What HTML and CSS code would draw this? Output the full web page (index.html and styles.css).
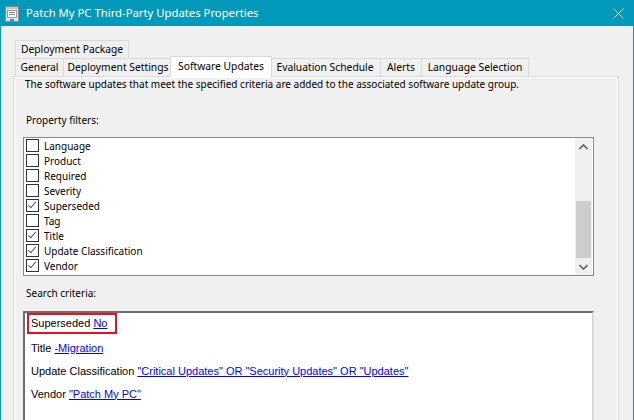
FILE: index.html
```html
<!DOCTYPE html>
<html>
<head>
<meta charset="utf-8">
<link rel="stylesheet" href="styles.css">
</head>
<body>
<div class="window">
  <div class="titlebar">
    <svg class="appicon" width="14" height="16" viewBox="0 0 14 16">
      <rect x="0.5" y="0.5" width="13" height="15" fill="#e8e8e8" stroke="#8a8a8a"/>
      <rect x="1" y="1" width="12" height="2" fill="#c4c4c4"/>
      <rect x="2.5" y="4.5" width="9" height="7" fill="#ffffff" stroke="#9a9a9a"/>
      <line x1="4" y1="6.5" x2="10" y2="6.5" stroke="#8a8a8a"/>
      <line x1="4" y1="8.5" x2="10" y2="8.5" stroke="#8a8a8a"/>
      <rect x="5" y="13" width="4" height="2" fill="#2e8fd8"/>
    </svg>
    <span class="title">Patch My PC Third-Party Updates Properties</span>
    <svg class="close" width="11" height="11" viewBox="0 0 11 11">
      <path d="M0.5 0.5 L10.5 10.5 M10.5 0.5 L0.5 10.5" stroke="#ffffff" stroke-width="1" fill="none"/>
    </svg>
  </div>
  <div class="client">
    <div class="tabs">
      <div class="tabrow">
        <div class="tab t-dp">Deployment Package</div>
      </div>
      <div class="tabrow">
        <div class="tab t-gen">General</div>
        <div class="tab t-ds">Deployment Settings</div>
        <div class="tab sel t-su">Software Updates</div>
        <div class="tab t-es">Evaluation Schedule</div>
        <div class="tab t-al">Alerts</div>
        <div class="tab t-ls">Language Selection</div>
      </div>
    </div>
    <div class="panel">
      <div class="intro">The software updates that meet the specified criteria are added to the associated software update group.</div>
      <div class="label first">Property filters:</div>
      <div class="listbox">
        <ul class="items">
          <li><span class="cb"></span>Language</li>
          <li><span class="cb"></span>Product</li>
          <li><span class="cb"></span>Required</li>
          <li><span class="cb"></span>Severity</li>
          <li><span class="cb on"></span>Superseded</li>
          <li><span class="cb"></span>Tag</li>
          <li><span class="cb on"></span>Title</li>
          <li><span class="cb on"></span>Update Classification</li>
          <li><span class="cb on"></span>Vendor</li>
        </ul>
        <div class="vscroll">
          <div class="sbtn">
            <svg width="9" height="6" viewBox="0 0 9 6"><path d="M0.5 5 L4.5 1 L8.5 5" stroke="#606060" stroke-width="1.6" fill="none"/></svg>
          </div>
          <div class="track"><div class="thumb"></div></div>
          <div class="sbtn">
            <svg width="9" height="6" viewBox="0 0 9 6"><path d="M0.5 1 L4.5 5 L8.5 1" stroke="#606060" stroke-width="1.6" fill="none"/></svg>
          </div>
        </div>
      </div>
      <div class="label second">Search criteria:</div>
      <div class="criteria">
        <div class="crow top"><span class="hl">Superseded <a class="lnk">No</a></span></div>
        <div class="crow">Title&nbsp;<a class="lnk">-Migration</a></div>
        <div class="crow">Update Classification&nbsp;<a class="lnk">"Critical Updates" OR "Security Updates" OR "Updates"</a></div>
        <div class="crow">Vendor&nbsp;<a class="lnk">"Patch My PC"</a></div>
      </div>
    </div>
  </div>
</div>
</body>
</html>
```

FILE: styles.css
```css
html, body {
  margin: 0;
  padding: 0;
  width: 634px;
  height: 420px;
  overflow: hidden;
  background: #f0f0f0;
}
.window {
  width: 632px;
  height: 420px;
  border-left: 1px solid #0399bb;
  border-right: 1px solid #0399bb;
  background: #f0f0f0;
  font-family: "Noto Sans", "Liberation Sans", sans-serif;
  color: #000;
  overflow: hidden;
}
.titlebar {
  height: 26px;
  background: #0399bb;
  display: flex;
  align-items: center;
  position: relative;
}
.appicon {
  margin-left: 4px;
  margin-top: 1px;
}
.title {
  margin-left: 7px;
  color: #ffffff;
  font-size: 11.3px;
  line-height: 16px;
}
.close {
  margin-left: auto;
  margin-right: 9px;
}
.client {
  padding: 14px 0 0 12px;
}
.tabs {
  padding-left: 2px;
}
.tabrow {
  display: flex;
  height: 18px;
}
.tab {
  box-sizing: border-box;
  height: 18px;
  border: 1px solid #d9d9d9;
  border-bottom: none;
  border-right: none;
  background: #f0f0f0;
  font-size: 10.3px;
  line-height: 17px;
  text-align: center;
  white-space: nowrap;
}
.tab:last-child { border-right: 1px solid #d9d9d9; }
.tab.sel {
  height: 21px;
  margin-top: -2px;
  margin-left: -2px;
  margin-right: -2px;
  background: #ffffff;
  border: 1px solid #d9d9d9;
  border-bottom: none;
  line-height: 19px;
  position: relative;
  z-index: 2;
}
.tab.sel + .tab { border-left: none; }
.t-dp { width: 114px; }
.t-gen { width: 48px; }
.t-ds { width: 109px; }
.t-su { width: 102px; }
.t-es { width: 110px; }
.t-al { width: 41px; }
.t-ls { width: 108px; }

.panel {
  box-sizing: border-box;
  width: 606px;
  height: 400px;
  border: 1px solid #d9d9d9;
  box-shadow: inset 1px 1px 0 #ffffff, inset -1px 0 0 #ffffff;
  padding: 0 0 0 9px;
  position: relative;
  z-index: 1;
}
.intro {
  font-size: 10px;
  line-height: 15px;
  padding-left: 2px;
  white-space: nowrap;
}
.label {
  font-size: 10px;
  line-height: 15px;
  padding-left: 3px;
}
.label.first { margin-top: 21px; }
.label.second { margin-top: 10px; }
.listbox {
  box-sizing: border-box;
  margin-top: 9px;
  width: 571px;
  height: 139px;
  border: 1px solid #828790;
  background: #ffffff;
  display: flex;
}
.items {
  list-style: none;
  margin: 0;
  padding: 0 0 0 2px;
  flex: 1;
}
.items li {
  height: 15px;
  display: flex;
  align-items: center;
  font-size: 10px;
  white-space: nowrap;
}
.cb {
  box-sizing: border-box;
  width: 13px;
  height: 13px;
  border: 1px solid #333333;
  background: #ffffff;
  margin-right: 5px;
  flex: none;
  position: relative;
}
.cb.on::after {
  content: "";
  position: absolute;
  left: 3px;
  top: 0px;
  width: 3px;
  height: 7px;
  border-right: 1.3px solid #555555;
  border-bottom: 1.3px solid #555555;
  transform: rotate(40deg);
}
.vscroll {
  width: 17px;
  margin-right: 1px;
  background: #f0f0f0;
  display: flex;
  flex-direction: column;
}
.sbtn {
  height: 17px;
  display: flex;
  align-items: center;
  justify-content: center;
  flex: none;
}
.track {
  flex: 1;
  display: flex;
  flex-direction: column;
  justify-content: flex-end;
}
.thumb {
  height: 57px;
  width: 15px;
  margin-left: 1px;
  background: #cdcdcd;
}
.criteria {
  box-sizing: border-box;
  margin-top: 10px;
  width: 571px;
  height: 120px;
  background: #ffffff;
  border-top: 2px solid #6d6d6d;
  border-left: 2px solid #6d6d6d;
  border-right: 2px solid #dadada;
  padding-left: 6px;
  font-family: "Liberation Sans", Arial, sans-serif;
  font-size: 11px;
}
.crow {
  height: 23px;
  display: flex;
  align-items: center;
  white-space: nowrap;
}
.crow.top {
  align-items: flex-start;
}
.hl {
  display: inline-block;
  border: 2px solid #e81123;
  padding: 1px 8px 1px 2px;
  margin-left: -4px;
  line-height: 15px;
}
.lnk {
  color: #0000ff;
  text-decoration: underline;
}
```
